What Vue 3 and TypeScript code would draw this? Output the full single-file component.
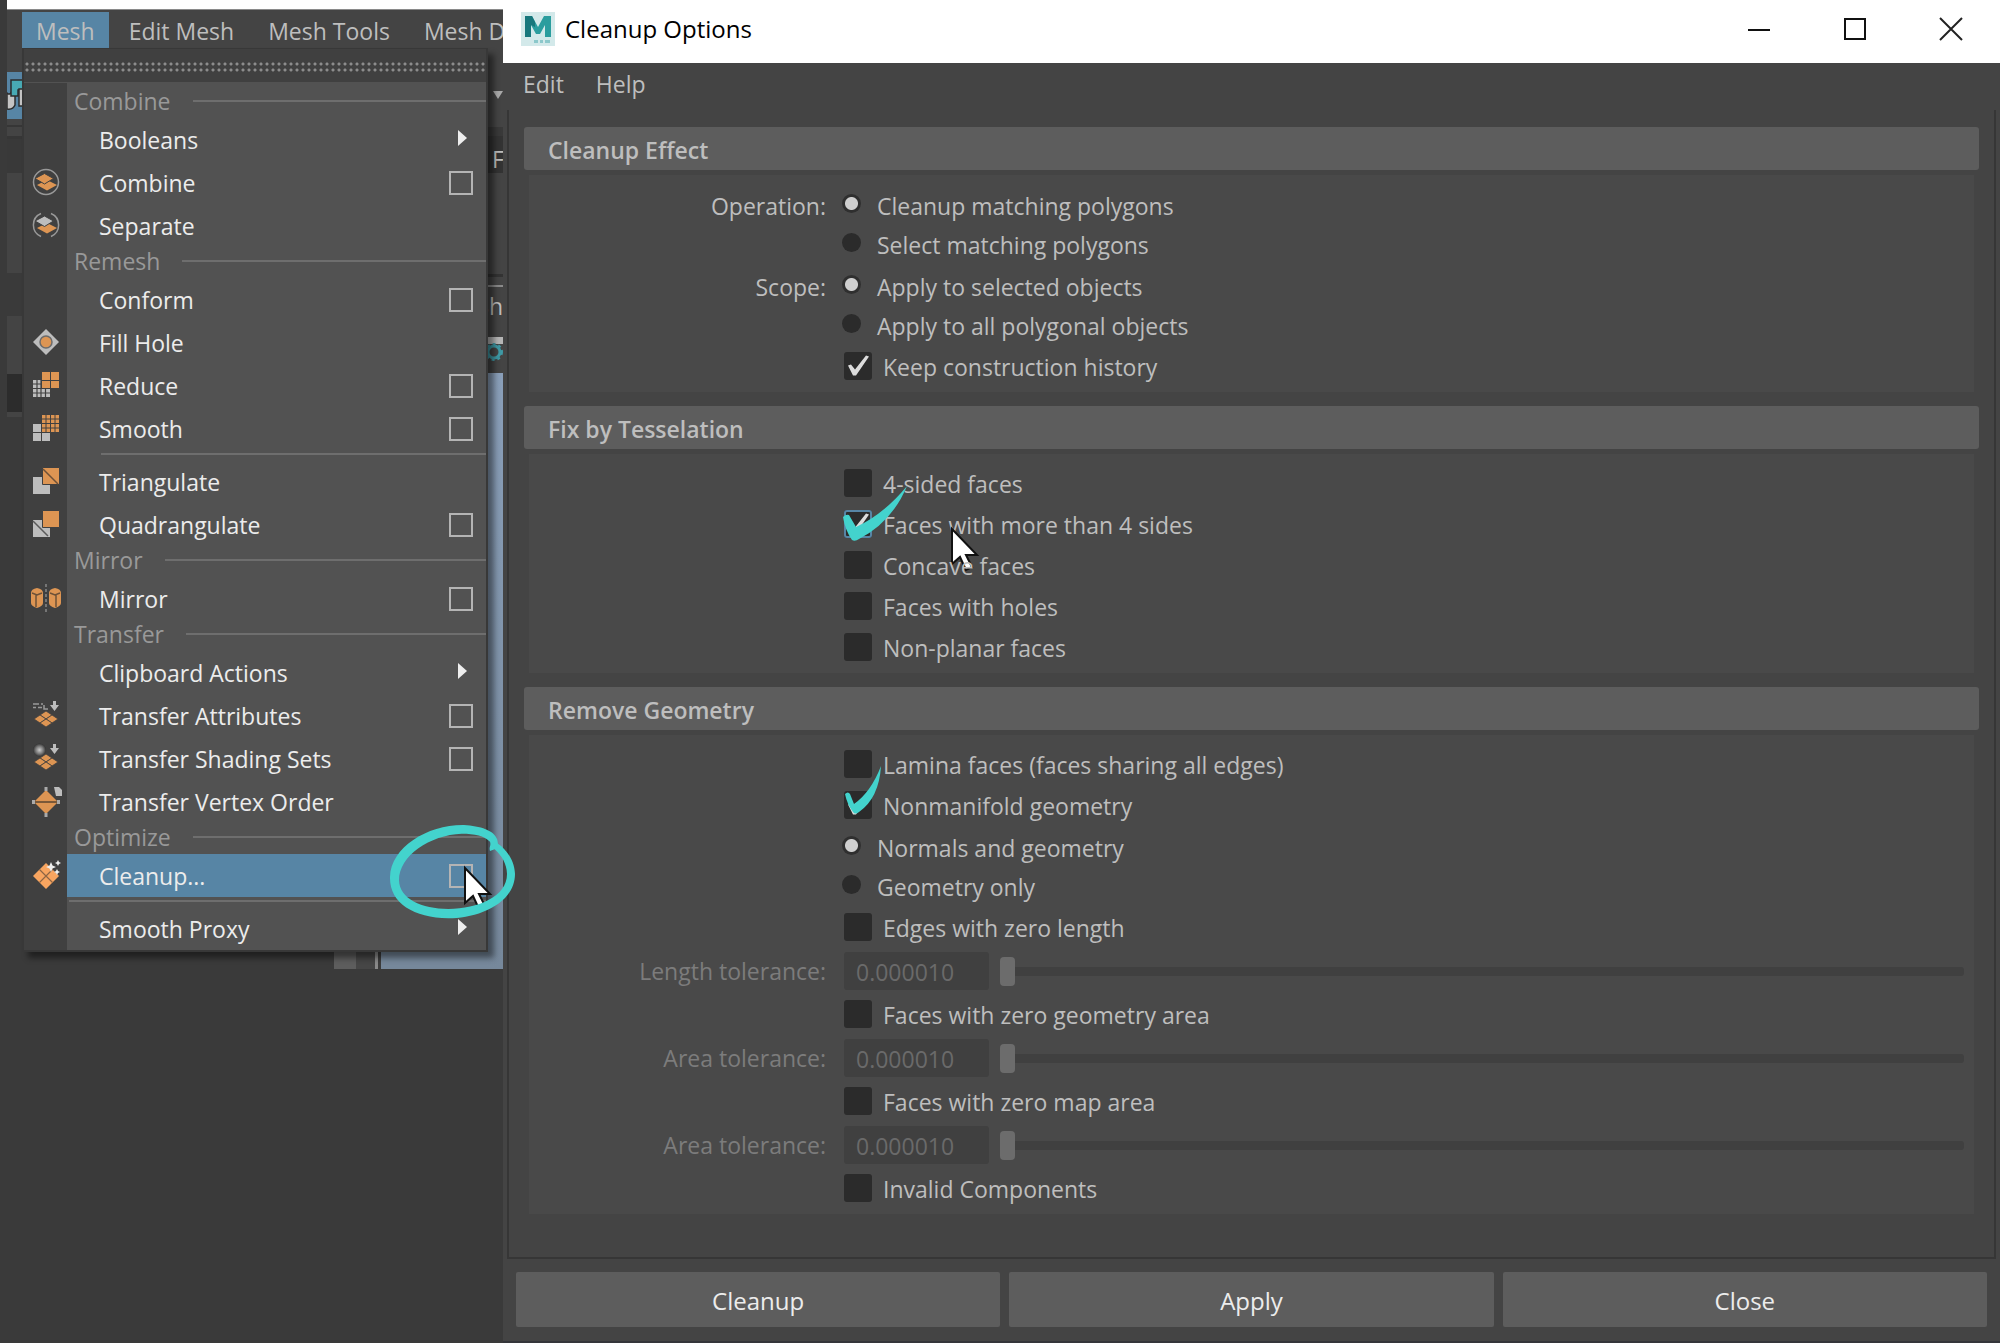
<script setup lang="ts">
import { ref } from 'vue'

type Entry =
  | { kind: 'header'; text: string }
  | { kind: 'line'; full?: boolean }
  | { kind: 'item'; text: string; icon?: string; box?: boolean; sub?: boolean; active?: boolean }

const O = '#dd9553'
const G = '#bdbdbd'
const D = '#404040'

const tiles = (cx: number, cy: number) =>
  `<g fill="${O}">` +
  [[0, -4], [-6, 0], [6, 0], [0, 4]]
    .map(([x, y]) => `<path d="M${cx + x - 6} ${cy + y}l6-4 6 4-6 4z" stroke="${D}" stroke-width=".8"/>`)
    .join('') +
  '</g>'
const downArrow = `<path d="M22 1h3v4h3l-4.500 6-4.500-6h3z" fill="${G}"/>`

const icons: Record<string, string> = {
  combine: `<circle cx="15" cy="15" r="12.500" fill="none" stroke="#999" stroke-width="1.500"/>
    <path d="M6 18l10-5 10 5-10 5.500z" fill="${O}"/><path d="M4 11.500l9.500-5 9 5-9 5.500z" fill="${O}" stroke="${D}" stroke-width="1"/>`,
  separate: `<path d="M10 3.500a12.500 12.500 0 0 0 0 23M20 3.500a12.500 12.500 0 0 1 0 23" fill="none" stroke="#999" stroke-width="1.500"/>
    <path d="M6 18l10-5 10 5-10 5.500z" fill="${O}"/><path d="M4 11l9.500-5 9 5-9 5.500z" fill="${G}" stroke="${D}" stroke-width="1"/>`,
  fillHole: `<path d="M15 2l13 13-13 13-13-13z" fill="${G}"/><circle cx="15" cy="15" r="6" fill="${O}" stroke="#6b6b6b" stroke-width="1.500"/>`,
  reduce: `<path d="M2 10h17v17H2z" fill="${G}"/><path d="M6 10v17M10 10v17M14.500 10v17M2 14h17M2 18.500h17M2 23h17" stroke="${D}" stroke-width="1.200"/>
    <path d="M10 1h18v18H10z" fill="${D}"/><path d="M11 2h8v8h-8zM20 2h8v8h-8zM11 11h8v7h-8zM20 11h8v7h-8z" fill="${O}"/>`,
  smooth: `<path d="M2 11h8v8H2zM11 11h8v8h-8zM2 20h8v8H2zM11 20h8v8h-8z" fill="${G}"/><path d="M10 1h18v18H10z" fill="${D}"/>
    <path d="M11 2h17v17H11z" fill="${O}"/><path d="M15 2v17M19.500 2v17M24 2v17M11 6h17M11 10.500h17M11 15h17" stroke="${D}" stroke-width="1"/>`,
  triangulate: `<path d="M2 11h17v17H2z" fill="${G}"/><path d="M11.500 1.500h17v17h-17z" fill="${O}" stroke="${D}"/><path d="M12 3l15 15" stroke="#6d5138" stroke-width="1.500"/>`,
  quadrangulate: `<path d="M2 11h17v17H2z" fill="${G}"/><path d="M2 12l15 15" stroke="#5a5a5a" stroke-width="1.500"/><path d="M11.500 1.500h17v17h-17z" fill="${O}" stroke="${D}"/>`,
  mirror: `<path d="M0 10q0-4 6-5 6 1 6 5v10q0 3-6 5-6-2-6-5zM18 10q0-4 6-5 6 1 6 5v10q0 3-6 5-6-2-6-5z" fill="${O}"/>
    <path d="M1 10l5 2 5-2M5 12v12M29 10l-5 2-5-2M25 12v12" stroke="#6d5138" stroke-width="1.500" fill="none"/>
    <path d="M15 1v28" stroke="#9a9a9a" stroke-width="1.200" stroke-dasharray="3 2"/>`,
  attributes: `<path d="M2 4h6M10 4h2M2 7.500h3M7 7.500h4M13 5v4h4" stroke="#999" stroke-width="1.500" fill="none"/>${downArrow}${tiles(15, 19)}`,
  shading: `<defs><radialGradient id="ball"><stop offset="0" stop-color="#ccc"/><stop offset=".6" stop-color="#777"/><stop offset="1" stop-color="#333"/></radialGradient></defs>
    <circle cx="8.500" cy="7" r="6.500" fill="url(#ball)"/>${downArrow}${tiles(15, 19)}`,
  vertex: `<path d="M15 4l12 12-12 12-12-12z" fill="${O}"/><path d="M3 16h24" stroke="#5a4630" stroke-width="1.500"/>
    <path d="M13.500 1h3v4h-3zM13.500 27h3v4h-3zM1 14h3v4H1zM26 14h3v4h-3z" fill="#aaa"/><path d="M23 1h5l3 3v6h-6z" fill="${G}"/>`,
  cleanup: `<path d="M15 3l13 13-13 13-13-13z" fill="#f8a560"/><path d="M8.500 9.500l13 13M21.500 9.500l-13 13" stroke="#8d6544" stroke-width="1.200"/>
    <path d="M20 2l1.500 3.500 3.500 1.500-3.500 1.500-1.500 3.500-1.500-3.500-3.500-1.500 3.500-1.500zM27 0l1 2 2 1-2 1-1 2-1-2-2-1 2-1zM26 9l1 2 2 1-2 1-1 2-1-2-2-1 2-1z" fill="#eee"/>`,
}

const topMenus = ['Mesh', 'Edit Mesh', 'Mesh Tools', 'Mesh Display']

const entries: Entry[] = [
  { kind: 'header', text: 'Combine' },
  { kind: 'item', text: 'Booleans', sub: true },
  { kind: 'item', text: 'Combine', icon: 'combine', box: true },
  { kind: 'item', text: 'Separate', icon: 'separate' },
  { kind: 'header', text: 'Remesh' },
  { kind: 'item', text: 'Conform', box: true },
  { kind: 'item', text: 'Fill Hole', icon: 'fillHole' },
  { kind: 'item', text: 'Reduce', icon: 'reduce', box: true },
  { kind: 'item', text: 'Smooth', icon: 'smooth', box: true },
  { kind: 'line' },
  { kind: 'item', text: 'Triangulate', icon: 'triangulate' },
  { kind: 'item', text: 'Quadrangulate', icon: 'quadrangulate', box: true },
  { kind: 'header', text: 'Mirror' },
  { kind: 'item', text: 'Mirror', icon: 'mirror', box: true },
  { kind: 'header', text: 'Transfer' },
  { kind: 'item', text: 'Clipboard Actions', sub: true },
  { kind: 'item', text: 'Transfer Attributes', icon: 'attributes', box: true },
  { kind: 'item', text: 'Transfer Shading Sets', icon: 'shading', box: true },
  { kind: 'item', text: 'Transfer Vertex Order', icon: 'vertex' },
  { kind: 'header', text: 'Optimize' },
  { kind: 'item', text: 'Cleanup...', icon: 'cleanup', box: true, active: true },
  { kind: 'line', full: true },
  { kind: 'item', text: 'Smooth Proxy', sub: true },
]

const operation = ref('clean')
const scope = ref('selected')
const nonmanifold = ref('both')
const keepHistory = ref(true)

const tessellation = ref([
  { text: '4-sided faces', on: false },
  { text: 'Faces with more than 4 sides', on: true },
  { text: 'Concave faces', on: false },
  { text: 'Faces with holes', on: false },
  { text: 'Non-planar faces', on: false },
])
const lamina = ref(false)
const nonmanifoldOn = ref(true)
const invalid = ref(false)
const tolerances = ref([
  { text: 'Edges with zero length', label: 'Length tolerance:', on: false, value: '0.000010' },
  { text: 'Faces with zero geometry area', label: 'Area tolerance:', on: false, value: '0.000010' },
  { text: 'Faces with zero map area', label: 'Area tolerance:', on: false, value: '0.000010' },
])
</script>

<template>
  <div class="screen">
    <section class="app">
      <div class="app-title"></div>
      <nav class="menubar">
        <button v-for="(m, i) in topMenus" :key="m" type="button" :class="{ open: i === 0 }">{{ m }}</button>
      </nav>

      <div class="workspace">
        <div class="left-strip">
          <svg class="tool" viewBox="0 0 15 47" width="15" height="47">
            <path d="M0 21q4 3 5-3h3v15q-2 5-8 4z" fill="#c4c4c4" stroke="#2c2c2c" stroke-width="1.500" />
            <path d="M4 8h12v10h-5v6H4z" fill="#48aab4" stroke="#2c2c2c" stroke-width="1.500" />
            <path d="M12 17h4v17h-4z" fill="#c4c4c4" stroke="#2c2c2c" stroke-width="1.500" />
          </svg>
          <i class="s1"></i><i class="s2"></i><i class="s3"></i><i class="s4"></i><i class="s5"></i><i class="s6"></i>
        </div>
        <div class="canvas">
          <i class="c1"></i><i class="c2"></i><i class="c3"></i><i class="c4"></i>
        </div>
        <div class="right-strip">
          <div class="r-tools"><span class="caret"></span></div>
          <div class="r-dark"><span>F</span></div>
          <div class="r-gap"></div>
          <div class="r-panel"><span>Sh</span></div>
          <svg class="gear" viewBox="0 0 16 36" width="16" height="36">
            <path d="M0 0h16v7H0z" fill="#b5b5b5" />
            <circle cx="7" cy="15" r="6" fill="#444" stroke="#3f9aa6" stroke-width="3" />
            <circle cx="7" cy="15" r="8" fill="none" stroke="#3f9aa6" stroke-width="2" stroke-dasharray="3 3" />
          </svg>
          <div class="r-view"></div>
        </div>
      </div>

      <div class="menu">
        <div class="tear"></div>
        <div class="entries">
          <template v-for="(e, i) in entries" :key="i">
            <div v-if="e.kind === 'header'" class="head"><span>{{ e.text }}</span><i></i></div>
            <div v-else-if="e.kind === 'line'" class="line" :class="{ full: e.full }"><i></i></div>
            <div v-else class="item" :class="{ active: e.active }">
              <div class="gutter">
                <svg v-if="e.icon" viewBox="0 0 30 30" width="30" height="30" v-html="icons[e.icon]"></svg>
              </div>
              <div class="row">
                <button type="button" class="command">{{ e.text }}</button>
                <button v-if="e.box" type="button" class="box" :aria-label="e.text + ' options'"></button>
                <span v-if="e.sub" class="arrow"></span>
              </div>
              <template v-if="e.active">
                <svg class="pointer on-box" viewBox="0 0 27 44" width="27" height="44">
                  <path d="M1 1v35l8-7 6 13 6-3-6-12h11z" fill="#fff" stroke="#111" stroke-width="2" />
                </svg>
                <svg class="ring" viewBox="1161 425 396 300" width="132" height="100">
                  <path
                    fill="#43d3cd"
                    fill-rule="evenodd"
                    d="M1170 590C1172 500 1285 432 1392 434C1440 437 1484 450 1492 478L1494 490C1520 508 1543 540 1545 580C1545 672 1430 714 1345 714C1240 712 1168 668 1170 590ZM1197 600C1198 655 1265 686 1345 686C1435 684 1522 650 1521 580C1520 552 1506 526 1484 507L1470 512C1466 500 1474 496 1470 484C1452 466 1425 460 1385 460C1290 464 1197 525 1197 600Z"
                  />
                </svg>
              </template>
            </div>
          </template>
        </div>
      </div>
    </section>

    <main class="dialog">
      <header class="titlebar">
        <svg class="logo" viewBox="0 0 34 34" width="34" height="34">
          <path d="M0 0h34v34H0z" fill="#d3e9ea" />
          <path d="M4 4h7l6 11 6-11h7v21h-6V13l-5 9h-4l-5-9v12H4z" fill="#2a9d9e" />
          <path d="M4 4h7l3 6v5l-4-2v12H4z" fill="#17777c" />
          <path d="M13 28h4v3h-4zM19 28h3v3h-3zM24 28h5v3h-5z" fill="#8cc8cb" />
        </svg>
        <h1>Cleanup Options</h1>
        <div class="controls">
          <button type="button" aria-label="Minimize">
            <svg viewBox="0 0 24 24" width="24" height="24"><path d="M1 13h22" stroke="#111" stroke-width="2" /></svg>
          </button>
          <button type="button" aria-label="Maximize">
            <svg viewBox="0 0 24 24" width="24" height="24"><path d="M2 2h20v20H2z" fill="none" stroke="#111" stroke-width="2" /></svg>
          </button>
          <button type="button" aria-label="Close">
            <svg viewBox="0 0 24 24" width="24" height="24"><path d="M1 1l22 22M23 1L1 23" stroke="#222" stroke-width="2" /></svg>
          </button>
        </div>
      </header>
      <nav class="dialog-menu">
        <button type="button">Edit</button>
        <button type="button">Help</button>
      </nav>

      <div class="frame">
        <section>
          <h2>Cleanup Effect</h2>
          <div class="panel">
            <div class="group" role="radiogroup" aria-label="Operation">
              <div class="radio-row">
                <span class="label">Operation:</span>
                <label><input v-model="operation" type="radio" name="operation" value="clean" />Cleanup matching polygons</label>
              </div>
              <div class="radio-row">
                <label><input v-model="operation" type="radio" name="operation" value="select" />Select matching polygons</label>
              </div>
            </div>
            <div class="group" role="radiogroup" aria-label="Scope">
              <div class="radio-row">
                <span class="label">Scope:</span>
                <label><input v-model="scope" type="radio" name="scope" value="selected" />Apply to selected objects</label>
              </div>
              <div class="radio-row">
                <label><input v-model="scope" type="radio" name="scope" value="all" />Apply to all polygonal objects</label>
              </div>
            </div>
            <div class="check-row">
              <label><input v-model="keepHistory" type="checkbox" />Keep construction history</label>
            </div>
          </div>
        </section>

        <section>
          <h2>Fix by Tesselation</h2>
          <div class="panel">
            <div v-for="t in tessellation" :key="t.text" class="check-row">
              <label :class="{ focus: t.on }"><input v-model="t.on" type="checkbox" />{{ t.text }}</label>
              <template v-if="t.on">
                <svg class="tick big" viewBox="0 0 66 56" width="66" height="56">
                  <path d="M1 31Q4 28 7 29L14 41Q42 28 65 0Q50 36 17 53Q13 56 10 54Q3 44 1 31Z" fill="#43d3cd" />
                </svg>
                <svg class="pointer on-text" viewBox="0 0 27 44" width="27" height="44">
                  <path d="M1 1v35l8-7 6 13 6-3-6-12h11z" fill="#fff" stroke="#111" stroke-width="2" />
                </svg>
              </template>
            </div>
          </div>
        </section>

        <section>
          <h2>Remove Geometry</h2>
          <div class="panel">
            <div class="check-row">
              <label><input v-model="lamina" type="checkbox" />Lamina faces (faces sharing all edges)</label>
            </div>
            <div class="check-row">
              <label><input v-model="nonmanifoldOn" type="checkbox" />Nonmanifold geometry</label>
              <svg class="tick small" viewBox="0 0 37 48" width="37" height="48">
                <path d="M0 28Q3 25 5 28L9 38Q26 26 36 0Q34 32 14 46Q10 49 8 46Q2 38 0 28Z" fill="#43d3cd" />
              </svg>
            </div>
            <div class="group" role="radiogroup" aria-label="Nonmanifold geometry">
              <div class="radio-row">
                <label><input v-model="nonmanifold" type="radio" name="nonmanifold" value="both" />Normals and geometry</label>
              </div>
              <div class="radio-row">
                <label><input v-model="nonmanifold" type="radio" name="nonmanifold" value="only" />Geometry only</label>
              </div>
            </div>
            <template v-for="(t, i) in tolerances" :key="i">
              <div class="check-row">
                <label><input v-model="t.on" type="checkbox" />{{ t.text }}</label>
              </div>
              <div class="value-row">
                <label class="label" :for="'tolerance' + i">{{ t.label }}</label>
                <input :id="'tolerance' + i" v-model="t.value" class="field" type="text" :disabled="!t.on" />
                <input class="slider" type="range" min="0" max="1" step="any" value="0" :aria-label="t.label" :disabled="!t.on" />
              </div>
            </template>
            <div class="check-row">
              <label><input v-model="invalid" type="checkbox" />Invalid Components</label>
            </div>
          </div>
        </section>
      </div>

      <footer>
        <button type="button">Cleanup</button>
        <button type="button">Apply</button>
        <button type="button">Close</button>
      </footer>
    </main>
  </div>
</template>

<style>
body {
  background: #3a3a3a;
}
</style>

<style scoped>
* {
  box-sizing: border-box;
}
.screen {
  display: grid;
  grid-template-columns: 503px 1fr;
  min-height: 100vh;
  background: #3a3a3a;
  font-family: "Open Sans", "Noto Sans", sans-serif;
  font-size: 23px;
  line-height: 30px;
  color: #bebebe;
}
button {
  border: 0;
  padding: 0;
  margin: 0;
  background: none;
  font: inherit;
  color: inherit;
  text-align: left;
  white-space: nowrap;
}
i {
  display: block;
}

/* main window behind the dialog */
.app {
  position: relative;
  z-index: 1;
  padding-left: 7px;
}
.app-title {
  height: 10px;
  background: #fff;
  border-bottom: 1px solid #8a8a8a;
}
.menubar {
  display: flex;
  align-items: flex-end;
  height: 38px;
  padding-left: 15px;
  overflow: hidden;
  background: #444;
}
.menubar button {
  flex: none;
  height: 36px;
  padding: 2px 14px 0;
  margin-right: 6px;
}
.menubar .open {
  background: #5785a5;
}
.workspace {
  display: flex;
  height: 921px;
}
.left-strip {
  width: 15px;
  padding-top: 24px;
  background: linear-gradient(#444 369px, #3a3a3a 369px);
}
.tool {
  display: block;
  background: #5785a5;
}
.s1 { height: 6px; }
.s2 { height: 2px; background: #363636; }
.s3 { height: 12px; border-bottom: 3px solid #363636; }
.s4 { height: 34px; background: #393939; }
.s5 { height: 143px; background: linear-gradient(#444 100px, #3a3a3a 100px); }
.s6 { height: 96px; border-bottom: 38px solid #2c2c2c; }
.canvas {
  flex: 1;
  display: flex;
  align-items: flex-end;
  justify-content: flex-end;
}
.canvas i {
  height: 60px;
}
.c1 { width: 22px; background: #5d5d5d; }
.c2 { width: 19px; background: #464646; }
.c3 { width: 6px; border-left: 3px solid #8a8a8a; background: #3c3c3c; }
.c4 { width: 106px; background: #76889b; }
.right-strip {
  display: flex;
  flex-direction: column;
  width: 16px;
  overflow: hidden;
  background: #444;
}
.r-tools {
  height: 88px;
  padding: 43px 0 0 6px;
  border-bottom: 9px solid #393939;
}
.caret {
  display: block;
  border: 5px solid transparent;
  border-top: 8px solid #aaa;
}
.r-dark {
  height: 37px;
  padding: 8px 0 0 5px;
  background: #333;
}
.r-gap {
  height: 104px;
  border-bottom: 3px solid #333;
}
.r-panel {
  display: flex;
  justify-content: flex-end;
  height: 60px;
  padding-top: 8px;
}
.r-panel span {
  border-top: 2px solid #8a8a8a;
  padding-top: 4px;
}
.gear {
  display: block;
  flex: none;
}
.r-view {
  flex: 1;
  background: linear-gradient(#8a9fb9, #76889b);
}

/* drop-down menu */
.menu {
  position: absolute;
  top: 48px;
  left: 22px;
  width: 466px;
  border: 2px solid #383838;
  border-top-width: 1px;
  background: #404040;
  color: #ececec;
  box-shadow: 6px 6px 6px rgba(0, 0, 0, 0.45);
}
.tear {
  height: 33px;
  background: radial-gradient(circle, #8c8c8c 1px, transparent 2px) 0 12px / 6px 6px repeat-x,
    radial-gradient(circle, #8c8c8c 1px, transparent 2px) 0 18px / 6px 6px repeat-x;
}
.entries {
  padding-top: 4px;
  border-top: 1px solid #525252;
  background: linear-gradient(90deg, #404040 43px, #525252 43px);
}
.head {
  display: flex;
  align-items: center;
  gap: 22px;
  height: 31px;
  padding: 0 0 3px 50px;
  color: #999;
}
.head i {
  flex: 1;
  height: 2px;
  background: #6e6e6e;
}
.line {
  height: 10px;
  padding: 3px 0 0 77px;
}
.line.full {
  padding-left: 45px;
}
.line i {
  height: 2px;
  background: #6e6e6e;
}
.item {
  position: relative;
  display: flex;
  height: 43px;
}
.gutter {
  width: 43px;
  padding: 6px 0 0 7px;
}
.gutter svg {
  display: block;
  overflow: visible;
}
.row {
  flex: 1;
  display: flex;
  align-items: center;
  padding: 0 13px 0 32px;
}
.active .row {
  background: #5785a5;
}
.command {
  flex: 1;
  height: 43px;
}
.box {
  width: 24px;
  height: 24px;
  border: 2px solid #b4b4b4;
}
.arrow {
  margin: 0 6px 4px 0;
  border: 8px solid transparent;
  border-left: 9px solid #eee;
  border-right: 0;
}
.pointer {
  position: absolute;
  overflow: visible;
}
.on-box {
  top: 13px;
  left: 440px;
}
.ring {
  position: absolute;
  top: -32px;
  left: 363px;
}

/* options dialog */
.dialog {
  display: flex;
  flex-direction: column;
  min-width: 0;
  background: #444;
  border-bottom: 2px solid #35363a;
}
.titlebar {
  display: flex;
  align-items: center;
  height: 63px;
  padding: 0 37px 5px 18px;
  background: #fff;
  color: #000;
}
.logo {
  margin-right: 10px;
}
h1 {
  margin: 0;
  font-size: 24px;
  font-weight: 400;
}
.controls {
  display: flex;
  gap: 72px;
  margin-left: auto;
}
.controls svg {
  display: block;
}
.dialog-menu {
  display: flex;
  gap: 32px;
  height: 47px;
  padding: 6px 20px 0;
}
.dialog-menu button {
  height: 30px;
}
.frame {
  flex: 1;
  margin: 0 4px;
  padding: 17px 15px 0;
  border: 2px solid #363636;
  border-top: 0;
}
section + section {
  margin-top: 14px;
}
h2 {
  height: 43px;
  margin: 0 0 5px;
  padding: 0 24px;
  border-radius: 3px;
  background: #5d5d5d;
  font-size: 23px;
  font-weight: 600;
  line-height: 46px;
}
.panel {
  margin: 0 5px;
  padding: 9px 10px 5px;
  background: #494949;
}
.group {
  padding: 2px 0 1px;
}
.radio-row,
.check-row,
.value-row {
  position: relative;
  display: grid;
  grid-template-columns: 287px 1fr;
  column-gap: 18px;
  align-items: center;
  height: 39px;
}
.check-row {
  height: 41px;
}
.value-row {
  grid-template-columns: 287px 145px 1fr;
  height: 46px;
}
.label {
  text-align: right;
}
.value-row .label {
  color: #7c7c7c;
}
.radio-row label,
.check-row label {
  grid-column: 2;
  display: flex;
  align-items: center;
  white-space: nowrap;
}
input {
  margin: 0;
  appearance: none;
}
input[type='radio'] {
  width: 19px;
  height: 19px;
  margin: 0 16px 4px -2px;
  border-radius: 50%;
  background: #2b2b2b;
}
input[type='radio']:checked {
  background: radial-gradient(circle, #cfcfcf 6px, #2f2f2f 7px);
}
input[type='checkbox'] {
  width: 28px;
  height: 28px;
  margin: 0 11px 2px 0;
  border-radius: 3px;
  background: #2b2b2b;
}
input[type='checkbox']:checked::after {
  content: '';
  display: block;
  height: 28px;
  background: #dcdcdc;
  clip-path: polygon(4px 14px, 7px 13px, 11px 18px, 22px 4px, 25px 5px, 12px 24px, 9px 24px);
}
.focus input {
  box-shadow: inset 0 0 0 2px #5785a5;
}
.tick {
  position: absolute;
}
.big {
  top: -18px;
  left: 303px;
}
.small {
  top: -19px;
  left: 306px;
}
.on-text {
  top: 24px;
  left: 412px;
}
.field {
  width: 145px;
  height: 38px;
  padding: 2px 12px 0;
  border: 0;
  border-radius: 3px;
  background: #404040;
  font: inherit;
  color: #6a6a6a;
}
.slider {
  width: calc(100% + 7px);
  height: 29px;
  margin-left: -7px;
  background: none;
}
.slider::-webkit-slider-runnable-track {
  height: 9px;
  border-radius: 3px;
  background: #404040;
}
.slider::-webkit-slider-thumb {
  width: 15px;
  height: 29px;
  margin-top: -10px;
  border-radius: 4px;
  background: #6c6c6c;
  appearance: none;
}
footer {
  display: flex;
  gap: 9px;
  padding: 13px 13px 14px;
}
footer button {
  flex: 1;
  height: 55px;
  padding-top: 3px;
  border-radius: 2px;
  background: #5d5d5d;
  font-size: 24px;
  color: #ececec;
  text-align: center;
}
</style>
